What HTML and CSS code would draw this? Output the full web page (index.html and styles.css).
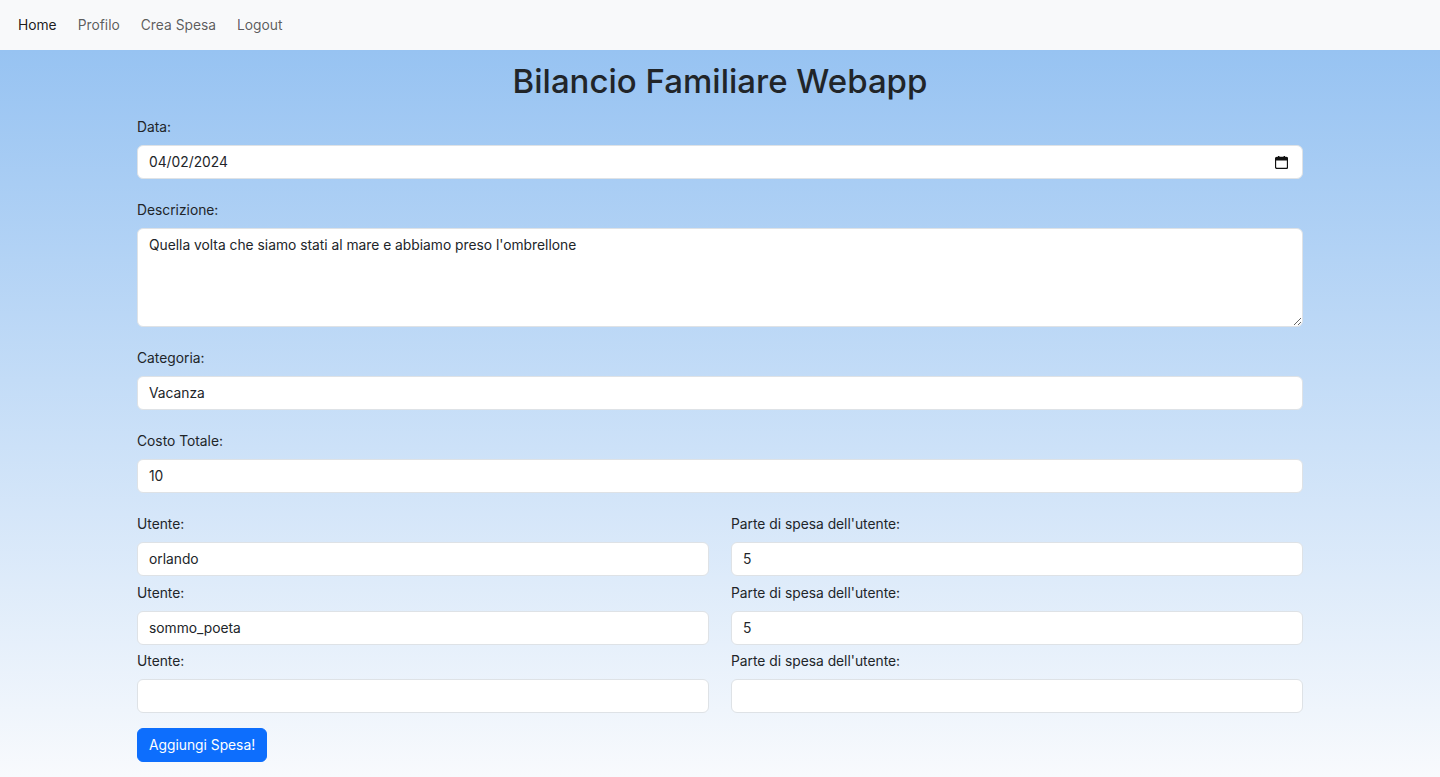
FILE: index.html
```html
<!DOCTYPE html>
<html lang="it">
<head>
<meta charset="utf-8">
<title>Bilancio Familiare Webapp</title>
<link rel="stylesheet" href="styles.css">
</head>
<body>
<nav class="navbar">
  <a class="nav-link active" href="#">Home</a>
  <a class="nav-link" href="#">Profilo</a>
  <a class="nav-link" href="#">Crea Spesa</a>
  <a class="nav-link" href="#">Logout</a>
</nav>
<main class="page">
  <div class="container">
    <h1 class="title">Bilancio Familiare Webapp</h1>
    <form class="form">
      <div class="group">
        <label class="label">Data:</label>
        <div class="field date-field">
          <span class="date-value">04/02/2024</span>
          <svg class="cal-icon" width="13" height="13" viewBox="0 0 13 13" aria-hidden="true">
            <rect x="0.5" y="1.5" width="12" height="11" rx="1.5" fill="none" stroke="#111" stroke-width="1.3"/>
            <rect x="0.5" y="1.5" width="12" height="3" fill="#111"/>
            <rect x="3" y="0" width="1.4" height="2.5" fill="#111"/>
            <rect x="8.6" y="0" width="1.4" height="2.5" fill="#111"/>
          </svg>
        </div>
      </div>
      <div class="group">
        <label class="label">Descrizione:</label>
        <textarea class="field textarea">Quella volta che siamo stati al mare e abbiamo preso l'ombrellone</textarea>
      </div>
      <div class="group">
        <label class="label">Categoria:</label>
        <input class="field" type="text" value="Vacanza">
      </div>
      <div class="group">
        <label class="label">Costo Totale:</label>
        <input class="field" type="text" value="10">
      </div>
      <div class="users">
        <div class="user-row">
          <div class="col"><label class="label">Utente:</label><input class="field" type="text" value="orlando"></div>
          <div class="col"><label class="label">Parte di spesa dell'utente:</label><input class="field" type="text" value="5"></div>
        </div>
        <div class="user-row">
          <div class="col"><label class="label">Utente:</label><input class="field" type="text" value="sommo_poeta"></div>
          <div class="col"><label class="label">Parte di spesa dell'utente:</label><input class="field" type="text" value="5"></div>
        </div>
        <div class="user-row">
          <div class="col"><label class="label">Utente:</label><input class="field" type="text" value=""></div>
          <div class="col"><label class="label">Parte di spesa dell'utente:</label><input class="field" type="text" value=""></div>
        </div>
      </div>
      <button class="btn" type="button">Aggiungi Spesa!</button>
    </form>
  </div>
</main>
</body>
</html>
```

FILE: styles.css
```css
* { box-sizing: border-box; }
html, body { margin: 0; padding: 0; }
body {
  font-family: Inter, "Noto Sans", "Liberation Sans", sans-serif;
  font-size: 13.8px;
  line-height: 21px;
  color: #212529;
  height: 777px;
  overflow: hidden;
  display: flex;
  flex-direction: column;
}
.navbar {
  height: 50px;
  background: #f8f9fa;
  display: flex;
  align-items: center;
  padding: 0 7.5px;
  flex-shrink: 0;
}
.nav-link {
  color: rgba(0, 0, 0, 0.65);
  text-decoration: none;
  padding: 0 10.5px;
  font-size: 13.8px;
}
.nav-link.active { color: rgba(0, 0, 0, 0.9); }
.page {
  flex: 1;
  background: linear-gradient(to bottom, #97c3f2 0%, #f8fafd 100%);
}
.container {
  width: 1166px;
  margin: 0 auto;
}
.title {
  margin: 11px 0 15px;
  text-align: center;
  font-size: 33px;
  line-height: 41px;
  font-weight: 500;
  color: #212529;
}
.label {
  display: block;
  line-height: 21px;
  margin-bottom: 7px;
}
.group { margin-bottom: 21px; }
.field {
  display: block;
  width: 100%;
  height: 34px;
  padding: 0 11px;
  font-family: inherit;
  font-size: 13.8px;
  color: #212529;
  background: #fff;
  border: 1px solid #dee2e6;
  border-radius: 6px;
  outline: none;
}
.date-field {
  display: flex;
  align-items: center;
  justify-content: space-between;
  padding-right: 14px;
}
.cal-icon { display: block; }
.textarea {
  height: 99px;
  padding: 6px 11px;
  line-height: 21px;
  resize: vertical;
}
.users { display: flex; flex-direction: column; gap: 6.5px; }
.user-row {
  display: grid;
  grid-template-columns: 1fr 1fr;
  column-gap: 22px;
}
.btn {
  margin-top: 15px;
  height: 34px;
  padding: 0 11px;
  font-family: inherit;
  font-size: 13.8px;
  color: #fff;
  background: #0d6efd;
  border: 1px solid #0d6efd;
  border-radius: 6px;
}
```
